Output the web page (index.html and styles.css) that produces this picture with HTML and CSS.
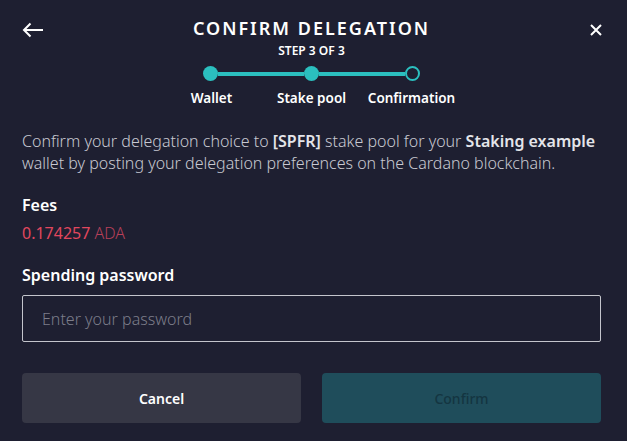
FILE: index.html
```html
<!DOCTYPE html>
<html lang="en">
<head>
    <meta charset="UTF-8">
    <meta name="viewport" content="width=device-width, initial-scale=1.0">
    <title>Confirm Delegation</title>
    <link rel="stylesheet" href="styles.css">
</head>
<body>
    <div class="dialog">
        <div class="header">
            <button class="icon-btn back" aria-label="Back">
                <svg width="22" height="16" viewBox="0 0 22 16">
                    <path d="M21 8H2M8.5 1.5L2 8l6.5 6.5" fill="none" stroke="#fff" stroke-width="2"/>
                </svg>
            </button>
            <div class="heading">
                <h1>CONFIRM DELEGATION</h1>
                <div class="step">STEP 3 OF 3</div>
                <div class="track">
                    <span class="dot done"></span>
                    <span class="line"></span>
                    <span class="dot done"></span>
                    <span class="line"></span>
                    <span class="dot current"></span>
                </div>
                <div class="labels">
                    <span>Wallet</span>
                    <span>Stake pool</span>
                    <span>Confirmation</span>
                </div>
            </div>
            <button class="icon-btn close" aria-label="Close">
                <svg width="12" height="12" viewBox="0 0 12 12">
                    <path d="M1 1l10 10M11 1L1 11" fill="none" stroke="#fff" stroke-width="2"/>
                </svg>
            </button>
        </div>

        <p class="intro">Confirm your delegation choice to <b>[SPFR]</b> stake pool for your <b>Staking example</b> wallet by posting your delegation preferences on the Cardano blockchain.</p>

        <div class="label">Fees</div>
        <div class="fees">0.174257 <span>ADA</span></div>

        <div class="label pw-label">Spending password</div>
        <input class="password" type="password" placeholder="Enter your password">

        <div class="actions">
            <button class="btn cancel">Cancel</button>
            <button class="btn confirm" disabled>Confirm</button>
        </div>
    </div>
</body>
</html>
```

FILE: styles.css
```css
body {
    margin: 0;
    background: #1e1f31;
    font-family: "Noto Sans", sans-serif;
    color: #fff;
}

.dialog {
    padding: 0 26px 0 22px;
}

.header {
    display: grid;
    grid-template-columns: 1fr auto 1fr;
    align-items: start;
}

.icon-btn {
    background: none;
    border: none;
    padding: 0;
    margin-top: 22px;
    cursor: pointer;
    display: flex;
}

.close {
    justify-self: end;
    margin-top: 24px;
    margin-right: -1px;
}

.heading {
    display: flex;
    flex-direction: column;
    align-items: center;
    padding-top: 16px;
}

h1 {
    margin: 0;
    font-size: 18px;
    font-weight: 600;
    letter-spacing: 2px;
    line-height: 25px;
}

.step {
    margin-top: 2px;
    font-size: 12px;
    font-weight: 600;
    line-height: 15px;
}

.track {
    display: flex;
    align-items: center;
    margin-top: 8px;
}

.dot {
    width: 15px;
    height: 15px;
    border-radius: 50%;
    box-sizing: border-box;
}

.dot.done {
    background: #2bbfbf;
}

.dot.current {
    border: 2px solid #2bbfbf;
}

.line {
    width: 86px;
    height: 4px;
    background: #2bbfbf;
}

.labels {
    display: flex;
    margin-top: 8px;
}

.labels span {
    width: 100px;
    text-align: center;
    font-size: 13.5px;
    font-weight: 600;
    line-height: 18px;
}

.intro {
    margin: 23px 0 0;
    font-size: 16px;
    font-weight: 300;
    line-height: 22px;
    color: #c8c9d2;
}

.intro b {
    color: #e4e5ea;
    font-weight: 600;
}

.label {
    margin-top: 21px;
    font-size: 16px;
    font-weight: 600;
    line-height: 20px;
}

.fees {
    margin-top: 8px;
    font-size: 16px;
    line-height: 20px;
    color: #e2475e;
}

.fees span {
    color: #b8405a;
    font-weight: 300;
}

.pw-label {
    margin-top: 22px;
}

.password {
    display: block;
    width: 100%;
    box-sizing: border-box;
    height: 47px;
    margin-top: 10px;
    padding: 0 19px;
    background: transparent;
    border: 1px solid #c4c5cc;
    border-radius: 2px;
    font-family: inherit;
    font-size: 16px;
    font-weight: 300;
    color: #fff;
}

.password::placeholder {
    color: #7c7d8a;
}

.actions {
    display: flex;
    gap: 21px;
    margin-top: 31px;
}

.btn {
    flex: 1;
    height: 50px;
    border: none;
    border-radius: 4px;
    font-family: inherit;
    font-size: 14px;
    font-weight: 600;
}

.cancel {
    background: #363745;
    color: #fff;
    cursor: pointer;
}

.confirm {
    background: #1f4d5b;
    color: #143541;
    font-weight: 500;
}
```
